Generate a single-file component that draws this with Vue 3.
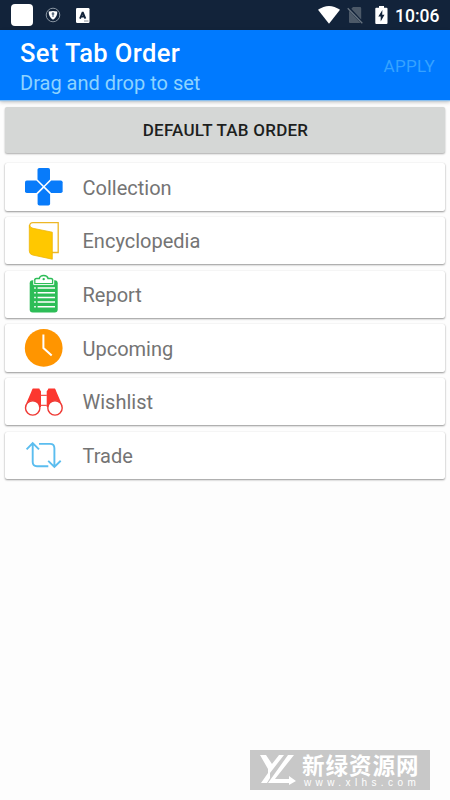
<script setup>
const tabs = ['Collection', 'Encyclopedia', 'Report', 'Upcoming', 'Wishlist', 'Trade']
</script>

<template>
  <div class="screen">
    <div class="status">
      <span class="app-square"></span>
      <svg class="shield" width="16" height="16" viewBox="0 0 16 16">
        <circle cx="8" cy="8" r="6.8" fill="none" stroke="#8995a2" stroke-width="1" />
        <path d="M3.7 4.5Q8 3.3 12.3 4.5Q12.5 10 8 12.7Q3.5 10 3.7 4.5Z" fill="#fff" />
        <path d="M8 5.2a1.5 1.5 0 0 1 .6 2.8v2H7.4V8A1.5 1.5 0 0 1 8 5.2Z" fill="#607080" />
      </svg>
      <svg class="letter" width="14" height="15" viewBox="0 0 14 15">
        <rect width="13.5" height="15" rx="1.2" fill="#fff" />
        <path d="M4 10.7L6.7 4.2L9.4 10.7M5 8.5H8.5" fill="none" stroke="#12233a" stroke-width="1.8" stroke-linejoin="bevel" />
        <path d="M8 13H12.5" stroke="#64707d" stroke-width=".8" />
      </svg>
      <span class="grow"></span>
      <svg class="wifi" width="22" height="18" viewBox="0 0 22 18">
        <path d="M0 3.8Q11-3.8 22 3.8L11 17.7Z" fill="#fff" />
      </svg>
      <svg class="sim" width="16" height="18" viewBox="0 0 16 18">
        <path d="M6 1H13Q14.2 1 14.2 2.2V13.6L4.3 2.7ZM2 4.8L13.6 17H3Q2 17 2 16Z" fill="#4c5968" />
        <path d="M.7 2.2L15.3 17.2" stroke="#687480" stroke-width="1.3" />
      </svg>
      <svg class="battery" width="13" height="19" viewBox="0 0 13 19">
        <path d="M4 0H9V1.8H11.5Q12.5 1.8 12.5 2.8V17Q12.5 18 11.5 18H1.2Q.3 18 .3 17V2.8Q.3 1.8 1.2 1.8H4Z" fill="#fff" />
        <path d="M7.4 4L3.3 10.5H5.7V15.4L9.5 8.8H7.2Z" fill="#12233a" />
      </svg>
      <span class="time">10:06</span>
    </div>

    <header>
      <div class="heading">
        <h1>Set Tab Order</h1>
        <p>Drag and drop to set</p>
      </div>
      <span class="apply">APPLY</span>
    </header>

    <main>
      <button>DEFAULT TAB ORDER</button>
      <div v-for="tab in tabs" :key="tab" class="card">
        <svg width="40" height="40" viewBox="0 0 40 40" fill="none">
          <g v-if="tab === 'Collection'" fill="#087bfa">
            <path id="arm" d="M15.3 1H24.2Q26 1 26 2.8V12.4L19.8 18.7L13.5 12.4V2.8Q13.5 1 15.3 1Z" />
            <use href="#arm" transform="rotate(90 19.8 19.8)" />
            <use href="#arm" transform="rotate(180 19.8 19.8)" />
            <use href="#arm" transform="rotate(270 19.8 19.8)" />
          </g>
          <g v-else-if="tab === 'Encyclopedia'">
            <path d="M5.7 7V4.8Q5.7 1.7 9 1.7H34.2V31.5H28" stroke="#edb726" stroke-width="1.3" />
            <path d="M5.3 4.3Q6 6.6 9 7.3L28.3 11.2V38.2L8.6 34Q5.3 33.1 5.3 30Z" fill="#ffc800" stroke="#edb60a" stroke-width=".8" />
          </g>
          <g v-else-if="tab === 'Report'">
            <rect x="5.7" y="6.2" width="28" height="32.3" rx="3" fill="#2dbd57" />
            <path d="M10.7 9.7V6.3Q10.7 4.5 12.5 4.5H15.3Q16 1.5 19.7 1.5T24.1 4.5H27Q28.7 4.5 28.7 6.3V9.7Z" fill="#fff" stroke="#2dbd57" stroke-width="1.5" />
            <path d="M9.7 6.2V10.6H29.7V6.2" stroke="#fff" stroke-width="1" />
            <circle cx="19.7" cy="5.1" r="1.2" fill="#2dbd57" />
            <path d="M13.6 14H31M13.6 18.7H31M13.6 23.4H31M13.6 28.1H31M13.6 32.8H31" stroke="#fff" stroke-width="1.5" />
            <path d="M10.2 14H11.8M10.2 18.7H11.8M10.2 23.4H11.8M10.2 28.1H11.8M10.2 32.8H11.8" stroke="#fff" stroke-width="1.5" />
          </g>
          <g v-else-if="tab === 'Upcoming'">
            <circle cx="19.7" cy="19.9" r="18.9" fill="#ff9500" />
            <path d="M19.4 6.5V20L27.7 27.6" stroke="#fff" stroke-width="2" />
          </g>
          <g v-else-if="tab === 'Wishlist'">
            <path id="barrel" d="M1.8 22.5L7.4 9.4Q8 7.4 8.8 6.5H15.3Q15.8 8.1 17 9.2V25H15Q13.2 18.5 8.7 18.5Q4.4 18.5 1.8 22.5Z" fill="#fc372f" />
            <use href="#barrel" transform="translate(39.7 0) scale(-1 1)" />
            <path d="M16.8 13.3H22.9M16.8 23.4H22.9" stroke="#f4554f" stroke-width="1.3" />
            <circle cx="8.7" cy="25.9" r="7.2" fill="#fff" stroke="#ef3934" stroke-width="1.4" />
            <circle cx="31" cy="25.9" r="7.2" fill="#fff" stroke="#ef3934" stroke-width="1.4" />
          </g>
          <g v-else stroke="#5bbdef" stroke-width="1.9">
            <path d="M2.6 14.4L8.7 8L15 14.4M8.7 8V27Q8.7 31.2 13 31.2H24.3" />
            <path d="M15 8.9H26Q30.4 8.9 30.4 13.3V32M24.2 25.8L30.4 32L36.7 25.8" />
          </g>
        </svg>
        <span>{{ tab }}</span>
      </div>
    </main>

    <div class="watermark">
      <svg width="36" height="32" viewBox="0 0 36 32">
        <path d="M0 1H6L12 10L19 1H24L10 19V24L7 29H1L8 19V15ZM28 1H34L15 25H29V22L36 27L29 31V29H8Z" fill="#fff" />
      </svg>
      <div class="site">
        <strong>新绿资源网</strong>
        <span>www.xlhs.com</span>
      </div>
    </div>
  </div>
</template>

<style>
body { margin: 0; background: #fdfdfd; }
</style>

<style scoped>
* { box-sizing: border-box; }
.screen { position: relative; width: 450px; height: 800px; overflow: hidden; background: #fdfdfd; font-family: Roboto, "Noto Sans CJK SC", sans-serif; }
.status { height: 30px; display: flex; align-items: center; padding: 0 10px 0 11px; background: #12233a; }
.app-square { width: 22px; height: 22px; border-radius: 4px; background: #fff; }
.shield { margin-left: 12px; }
.letter { margin-left: 15px; }
.grow { flex: 1; }
.sim { margin-left: 7px; }
.battery { margin-left: 12px; }
.time { width: 45px; margin-left: 7px; padding-top: 1px; color: #fff; font-size: 17.5px; line-height: 30px; font-weight: 500; white-space: nowrap; }
header { height: 70px; display: flex; align-items: center; justify-content: space-between; padding: 0 15px 0 20px; background: #007aff; box-shadow: 0 1px 1px #8abfee, 0 2px 4px #0004; }
.heading { align-self: flex-start; padding-top: 8px; }
h1 { margin: 0; font-size: 25.5px; line-height: 30px; font-weight: 500; letter-spacing: .4px; color: #fff; white-space: nowrap; }
p { margin: 2px 0 0; font-size: 20px; line-height: 26px; color: #8dd3ff; white-space: nowrap; }
.apply { margin-top: 2px; font-size: 17px; letter-spacing: .3px; color: #36a2ff; }
main { padding: 7px 5px; display: flex; flex-direction: column; }
button { height: 46px; margin: 0 0 10.2px; padding: 0 0 0 1px; border: 0; border-radius: 2px; font: 500 17px/46px Roboto, sans-serif; letter-spacing: .25px; color: #1d1f1e; background: #d5d7d6; box-shadow: 0 1px 2px #0005; }
.card { height: 47.5px; margin-bottom: 6.2px; display: flex; align-items: center; padding-left: 19px; border-radius: 2px; background: #fff; box-shadow: 0 1px 2px #0006, 0 0 1px #0002; }
.card svg { flex: none; }
.card span { margin-left: 18.5px; padding-top: 1.4px; font-size: 20px; line-height: 28px; color: #747474; }
.watermark { position: absolute; left: 250px; top: 750px; width: 180px; height: 40px; display: flex; align-items: center; padding-left: 10px; background: #c8c8c8; color: #fff; }
.site { display: flex; flex-direction: column; margin-left: 6px; }
.site strong { font: 700 22.5px/24px "Noto Sans CJK SC", sans-serif; letter-spacing: 1px; white-space: nowrap; }
.site span { margin: 2px 0 0 2px; font: 10px/10px "Liberation Sans", sans-serif; letter-spacing: 4.4px; white-space: nowrap; }
</style>
